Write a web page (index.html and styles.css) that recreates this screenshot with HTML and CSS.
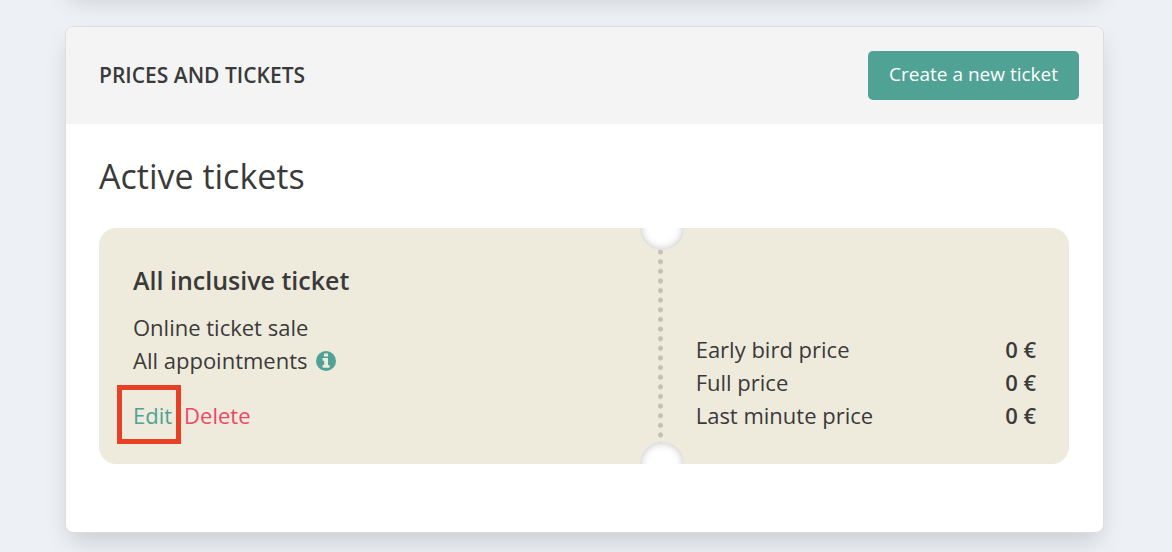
FILE: index.html
```
<!DOCTYPE html>
<html lang="en">
<head>
  <meta charset="UTF-8">
  <title>Prices and tickets</title>
  <link rel="stylesheet" href="styles.css">
</head>
<body>
  <main class="page">
    <section class="card card-previous"></section>

    <section class="card">
      <header class="card-header">
        <h2 class="card-title">PRICES AND TICKETS</h2>
        <button class="btn" type="button">Create a new ticket</button>
      </header>

      <div class="card-body">
        <h3 class="section-title">Active tickets</h3>

        <article class="ticket">
          <div class="ticket-info">
            <h4 class="ticket-name">All inclusive ticket</h4>
            <p>Online ticket sale</p>
            <p class="with-icon">
              All appointments
              <svg class="icon-info" viewBox="0 0 20 20" aria-hidden="true">
                <circle cx="10" cy="10" r="10" fill="#50a294"/>
                <path d="M8 2.4h4v3H8zM6.6 7h5.4v7h1.5v2.8H6.6V14h1.6V9.8H6.6z" fill="#f0ecdd"/>
              </svg>
            </p>
            <div class="ticket-actions">
              <a class="link-edit" href="#edit">Edit</a>
              <a class="link-delete" href="#delete">Delete</a>
            </div>
          </div>

          <div class="divider"></div>

          <dl class="prices">
            <div class="price-row"><dt>Early bird price</dt><dd>0 €</dd></div>
            <div class="price-row"><dt>Full price</dt><dd>0 €</dd></div>
            <div class="price-row"><dt>Last minute price</dt><dd>0 €</dd></div>
          </dl>
        </article>
      </div>
    </section>
  </main>
</body>
</html>
```
FILE: styles.css
```
* {
  box-sizing: border-box;
}

body {
  margin: 0;
  background-color: #edf1f6;
  color: #3a3a3a;
  font-family: "Open Sans", "Noto Sans", sans-serif;
  font-size: 22px;
  line-height: 33px;
}

h2, h3, h4, p, dl, dd {
  margin: 0;
}

.page {
  display: flex;
  flex-direction: column;
  gap: 34px;
  height: 100vh;
  padding: 0 68px 0 65px;
  overflow: hidden;
}

.card {
  flex-shrink: 0;
  background-color: white;
  border: 1px solid #dcdddd;
  border-radius: 8px;
  box-shadow: 0 12px 24px -5px rgba(0, 0, 0, 0.17);
}

/* end of the card above, scrolled out of view */
.card-previous {
  height: 60px;
  margin-top: -68px;
}

.card-header {
  display: flex;
  justify-content: space-between;
  align-items: center;
  padding: 24px 24px 24px 33px;
  background-color: #f4f4f4;
  border-radius: 7px 7px 0 0;
}

.card-title {
  font-size: 21px;
  font-weight: 600;
}

.btn {
  padding: 7px 21px 9px;
  background-color: #50a294;
  color: white;
  border: none;
  border-radius: 5px;
  font-family: inherit;
  font-size: 19px;
  line-height: 33px;
  cursor: pointer;
}

.card-body {
  padding: 28px 34px 68px 33px;
}

.section-title {
  margin-bottom: 28px;
  font-size: 34px;
  font-weight: 400;
  line-height: 48px;
}

.ticket {
  display: grid;
  grid-template-columns: 11fr 5px 8fr;
  background-color: #efebdc;
  border-radius: 17px;
  overflow: hidden;
}

.ticket-info {
  padding: 33px 34px 32px;
}

.ticket-name {
  margin-bottom: 12px;
  font-size: 25px;
  font-weight: 600;
  line-height: 38px;
}

.with-icon {
  display: flex;
  align-items: center;
  gap: 8px;
}

.icon-info {
  width: 20px;
  height: 20px;
}

.ticket-actions {
  display: flex;
  gap: 12px;
  margin-top: 22px;
}

.link-edit,
.link-delete {
  color: #50a294;
  text-decoration: none;
}

.link-edit {
  position: relative;
}

/* red frame around the edit link */
.link-edit::after {
  content: "";
  position: absolute;
  top: -14px;
  bottom: -12px;
  left: -16px;
  right: -9px;
  border: 5px solid #e94025;
}

.link-delete {
  color: #ec4869;
}

.divider {
  position: relative;
  background-image: radial-gradient(circle, #c2c0b3 2px, transparent 3px);
  background-size: 5px calc(100% / 24.5);
}

.divider::before,
.divider::after {
  content: "";
  position: absolute;
  left: -18px;
  width: 44px;
  height: 44px;
  background-color: white;
  border-radius: 50%;
  box-shadow: inset 0 0 8px rgba(0, 0, 0, 0.25);
}

.divider::before {
  top: -22px;
}

.divider::after {
  bottom: -22px;
}

.prices {
  align-self: end;
  padding: 0 33px 32px;
}

.price-row {
  display: flex;
  justify-content: space-between;
}

.price-row dd {
  font-weight: 600;
}
```
